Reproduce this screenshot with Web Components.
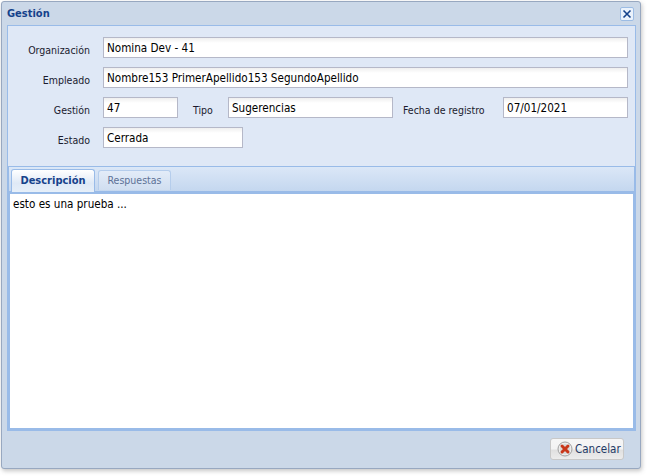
<!DOCTYPE html>
<html>
<head>
<meta charset="utf-8">
<title>Gestión</title>
<style>
  html, body { margin: 0; padding: 0; background: #fff; }
  body { width: 652px; height: 476px; overflow: hidden; font-family: "DejaVu Sans Condensed", "DejaVu Sans", sans-serif; }
</style>
</head>
<body>
<template id="window-tpl">
  <style>
    :host {
      display: flex;
      flex-direction: column;
      box-sizing: border-box;
      width: 640px;
      height: 468px;
      margin: 1px 0 0 1px;
      padding: 0 4px 0 5px;
      background: #cbd8e8;
      border: 1px solid #98a8c0;
      border-radius: 3px;
      box-shadow: 1px 2px 4px rgba(90, 90, 90, .35);
    }
    .head {
      display: flex;
      align-items: center;
      justify-content: space-between;
      height: 23px;
      flex: none;
      color: #15428b;
      font: bold 11px "DejaVu Sans Condensed", "DejaVu Sans", sans-serif;
    }
    .close {
      display: block;
      box-sizing: border-box;
      width: 14px;
      height: 14px;
      margin-right: 2px;
      border: 1px solid #9cbce4;
      border-radius: 2px;
      background: #eaf2fc;
    }
    .inner {
      flex: 1;
      display: flex;
      flex-direction: column;
      background: #dfe8f6;
      border: 1px solid #99bbe8;
      min-height: 0;
    }
    .foot {
      flex: none;
      height: 37px;
      display: flex;
      align-items: center;
      justify-content: flex-end;
      padding: 0 12px 2px 0;
      box-sizing: border-box;
    }
  </style>
  <div class="head">
    <span><slot name="title"></slot></span>
    <svg class="close" viewBox="0 0 12 12"><path d="M2.5 2.5l7 7M9.5 2.5l-7 7" stroke="#15428b" stroke-width="1.6" fill="none"/></svg>
  </div>
  <div class="inner"><slot></slot></div>
  <div class="foot"><slot name="foot"></slot></div>
</template>

<template id="form-tpl">
  <style>
    :host {
      display: grid;
      grid-template-columns: 75px 75px 15px 35px 165px 10px 100px 125px;
      grid-auto-rows: 21px;
      row-gap: 9px;
      flex: none;
      padding: 11px 7px 18px 20px;
    }
  </style>
  <slot></slot>
</template>

<template id="field-tpl">
  <style>
    :host { display: contents; }
    label {
      align-self: center;
      padding-top: 4px;
      padding-right: var(--label-pad, 13px);
      color: #1a1a2e;
      font: 10.5px "DejaVu Sans Condensed", "DejaVu Sans", sans-serif;
      white-space: nowrap;
      text-align: var(--align, right);
      grid-column: var(--label-col, 1);
    }
    .value {
      box-sizing: border-box;
      height: 21px;
      width: var(--width, auto);
      padding: 2px 3px 0 3px;
      border: 1px solid #b5b8c8;
      background: linear-gradient(#efefef, #fff 5px);
      color: #000;
      font: 11.6px/17px "DejaVu Sans Condensed", "DejaVu Sans", sans-serif;
      white-space: nowrap;
      overflow: hidden;
      grid-column: var(--value-col, auto);
    }
  </style>
  <label></label>
  <div class="value"></div>
</template>

<template id="tabs-tpl">
  <style>
    :host {
      flex: 1;
      display: flex;
      flex-direction: column;
      min-height: 0;
      border: 1px solid #99bbe8;
      border-bottom: 0;
    }
    .strip {
      flex: none;
      height: 25px;
      box-sizing: border-box;
      display: flex;
      align-items: flex-end;
      gap: 3px;
      padding-left: 2px;
      background: linear-gradient(#dbe7f7, #c4d7ef);
      border-bottom: 1px solid #99bbe8;
    }
    .content {
      flex: 1;
      background: #fff;
      border: solid #99bbe8;
      border-width: 2px 1px 2px 1px;
      min-height: 0;
      padding: 3px;
      color: #000;
      font: 11.6px "DejaVu Sans Condensed", "DejaVu Sans", sans-serif;
    }
  </style>
  <div class="strip"><slot name="tab"></slot></div>
  <div class="content"><slot></slot></div>
</template>

<template id="tab-tpl">
  <style>
    :host {
      display: block;
      box-sizing: border-box;
      width: 73px;
      height: 20px;
      margin-bottom: 1px;
      border: 1px solid #b5cdec;
      border-bottom: 0;
      border-radius: 3px 3px 0 0;
      background: linear-gradient(#e3ecf8, #d0def0);
      color: #5d7196;
      text-align: center;
      font: 10.5px/18px "DejaVu Sans Condensed", "DejaVu Sans", sans-serif;
    }
    :host([active]) {
      width: 84px;
      height: 23px;
      margin-bottom: -1px;
      background: linear-gradient(#fff, #dfe9f6 60%, #e6eff9);
      border-color: #99bbe8;
      color: #15428b;
      font-weight: bold;
      font-size: 11px;
      line-height: 21px;
    }
  </style>
  <slot></slot>
</template>

<template id="button-tpl">
  <style>
    :host {
      display: flex;
      align-items: center;
      gap: 2px;
      box-sizing: border-box;
      width: 74px;
      height: 22px;
      padding-left: 6px;
      border: 1px solid #c8c8c8;
      border-radius: 3px;
      background: linear-gradient(#f6f6f6 0, #f3f3f3 50%, #e0e0e0 55%, #ececec);
      color: #1f3a66;
      font: 11.5px "DejaVu Sans Condensed", "DejaVu Sans", sans-serif;
    }
    svg { width: 16px; height: 16px; flex: none; }
  </style>
  <svg viewBox="0 0 16 16">
    <circle cx="8" cy="8" r="7" fill="#eee" stroke="#a0a0a0"/>
    <circle cx="8" cy="8" r="5.2" fill="#d9d9d9"/>
    <path d="M5 5l6 6M11 5l-6 6" stroke="#c8371a" stroke-width="3" stroke-linecap="round"/>
  </svg>
  <slot></slot>
</template>

<script>
function define(name, tplId, extra) {
  customElements.define(name, class extends HTMLElement {
    constructor() {
      super();
      this.attachShadow({ mode: "open" });
      this.shadowRoot.appendChild(document.getElementById(tplId).content.cloneNode(true));
    }
    connectedCallback() {
      if (extra) extra.call(this);
    }
  });
}

define("x-window", "window-tpl");
define("x-form", "form-tpl");
define("x-tabs", "tabs-tpl");
define("x-tab", "tab-tpl");
define("x-button", "button-tpl");
define("x-field", "field-tpl", function () {
  this.shadowRoot.querySelector("label").textContent = this.getAttribute("label");
  this.shadowRoot.querySelector(".value").textContent = this.getAttribute("value");
});
</script>

<x-window>
  <span slot="title">Gestión</span>
  <x-form>
    <x-field label="Organización" value="Nomina Dev - 41" style="--value-col: 2 / 9"></x-field>
    <x-field label="Empleado" value="Nombre153 PrimerApellido153 SegundoApellido" style="--value-col: 2 / 9"></x-field>
    <x-field label="Gestión" value="47" style="--value-col: 2 / 3"></x-field>
    <x-field label="Tipo" value="Sugerencias" style="--label-col: 4 / 5; --value-col: 5 / 6; --align: left; --label-pad: 0"></x-field>
    <x-field label="Fecha de registro" value="07/01/2021" style="--label-col: 7 / 8; --value-col: 8 / 9; --align: left; --label-pad: 0"></x-field>
    <x-field label="Estado" value="Cerrada" style="--value-col: 2 / 6; --width: 140px"></x-field>
  </x-form>
  <x-tabs>
    <x-tab slot="tab" active>Descripción</x-tab>
    <x-tab slot="tab">Respuestas</x-tab>
    esto es una prueba ...
  </x-tabs>
  <x-button slot="foot">Cancelar</x-button>
</x-window>
</body>
</html>
